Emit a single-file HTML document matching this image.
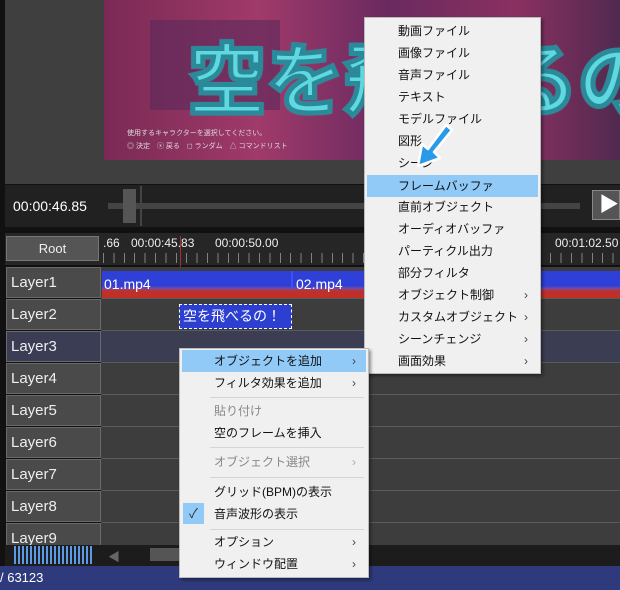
<!DOCTYPE html>
<html><head><meta charset="utf-8"><style>
*{margin:0;padding:0;box-sizing:border-box}
body{width:620px;height:590px;overflow:hidden;background:#111;font-family:"Liberation Sans","Noto Sans CJK JP",sans-serif;position:relative}
.a{position:absolute}
.lay{position:absolute;left:6px;width:95px;height:31px;background:#4a4a4a;border:1px solid #6a6a6a;color:#eee;font-size:15px;line-height:29px;padding-left:4px}
.row{position:absolute;left:101px;width:519px;height:32px;background:#3d3d3d;border-bottom:1px solid #5a5a5a}
.menu{position:absolute;background:#f0f0f0;border:1px solid #bbb;box-shadow:2px 2px 3px rgba(0,0,0,.4);font-size:12px;color:#111}
.mi{position:absolute;left:0;right:0;height:22px;line-height:22px;white-space:nowrap}
.hl{background:#91c9f7}
.ar{position:absolute;right:12px;top:0;color:#444}
.sep{position:absolute;height:1px;background:#d5d5d5}
.g{color:#888}
</style></head><body>
<div class="a" style="left:5px;top:0;width:615px;height:184px;background:#3f3f3f"></div>
<div class="a" style="left:104px;top:0;width:516px;height:160px;overflow:hidden;background:linear-gradient(90deg,#7a2a55,#a03a6a 30%,#6a2a60 55%,#8a3060 80%,#502a50)">
<div class="a" style="left:46px;top:20px;width:130px;height:90px;background:#5a2a5a;opacity:.6"></div>
<div class="a" style="left:84px;top:35px;font-size:78px;font-weight:bold;color:#5fd8e0;-webkit-text-stroke:5px #2a8a9a;line-height:92px;white-space:nowrap;text-shadow:0 0 3px #fff">空を飛べるの</div>
<div class="a" style="left:23px;top:128px;font-size:7px;color:#ddd;white-space:nowrap">使用するキャラクターを選択してください。</div>
<div class="a" style="left:23px;top:141px;font-size:7px;color:#ddd;white-space:nowrap">◎ 決定　ⓧ 戻る　◻ ランダム　△ コマンドリスト</div>
</div>
<div class="a" style="left:5px;top:185px;width:615px;height:42px;background:#212121"></div>
<div class="a" style="left:13px;top:198px;color:#fff;font-size:14px">00:00:46.85</div>
<div class="a" style="left:108px;top:203px;width:472px;height:6px;background:#444"></div>
<div class="a" style="left:123px;top:189px;width:13px;height:34px;background:#555"></div>
<div class="a" style="left:140px;top:186px;width:2px;height:40px;background:#444"></div>
<div class="a" style="left:592px;top:190px;width:28px;height:30px;background:#555;border:1px solid #888;color:#fff;font-size:20px;line-height:28px;padding-left:6px">▶</div>
<div class="a" style="left:5px;top:233px;width:615px;height:32px;background:#262626"></div>
<div class="a" style="left:6px;top:236px;width:93px;height:25px;background:#555;border:1px solid #777;color:#eee;font-size:13px;text-align:center;line-height:23px">Root</div>
<div class="a" style="left:103px;top:236px;color:#eee;font-size:12px">.66</div>
<div class="a" style="left:131px;top:236px;color:#eee;font-size:12px">00:00:45.83</div>
<div class="a" style="left:215px;top:236px;color:#eee;font-size:12px">00:00:50.00</div>
<div class="a" style="left:555px;top:236px;color:#eee;font-size:12px">00:01:02.50</div>
<div class="a" style="left:103px;top:253px;width:517px;height:10px;background:repeating-linear-gradient(90deg,#aaa 0 1px,transparent 1px 10.4px);opacity:.7"></div>
<div class="a" style="left:180px;top:236px;width:1px;height:300px;background:#c33;opacity:.8"></div>
<div class="row" style="top:267px"></div>
<div class="row" style="top:299px"></div>
<div class="row" style="top:331px;background:#3b3d52"></div>
<div class="row" style="top:363px"></div><div class="row" style="top:395px"></div><div class="row" style="top:427px"></div><div class="row" style="top:459px"></div><div class="row" style="top:491px"></div><div class="row" style="top:523px"></div>
<div class="lay" style="top:267px">Layer1</div><div class="lay" style="top:299px">Layer2</div><div class="lay" style="top:331px;background:#3b3d55">Layer3</div><div class="lay" style="top:363px">Layer4</div><div class="lay" style="top:395px">Layer5</div><div class="lay" style="top:427px">Layer6</div><div class="lay" style="top:459px">Layer7</div><div class="lay" style="top:491px">Layer8</div><div class="lay" style="top:523px">Layer9</div>
<div class="a" style="left:102px;top:271px;width:518px;height:27px;background:linear-gradient(#2f40d8 0,#2f40d8 55%,#7a4aa0 65%,#c03028 75%,#c03028)"></div>
<div class="a" style="left:291px;top:271px;width:2px;height:18px;background:#3f50f0"></div>
<div class="a" style="left:104px;top:276px;color:#fff;font-size:14px">01.mp4</div>
<div class="a" style="left:296px;top:276px;color:#fff;font-size:14px">02.mp4</div>
<div class="a" style="left:179px;top:304px;width:113px;height:25px;background:#2d3fd0;border:1px dashed #fff;color:#fff;font-size:14px;line-height:22px;padding-left:3px;white-space:nowrap">空を飛べるの！</div>
<div class="a" style="left:5px;top:545px;width:615px;height:21px;background:#1c1c1c"></div>
<div class="a" style="left:14px;top:546px;width:78px;height:18px;background:repeating-linear-gradient(90deg,#5a9ae8 0 2px,transparent 2px 4px)"></div>
<div class="a" style="left:108px;top:548px;color:#666;font-size:12px">◀</div>
<div class="a" style="left:150px;top:548px;width:40px;height:13px;background:#555"></div>
<div class="a" style="left:0;top:566px;width:620px;height:24px;background:#2e3a7c;color:#fff;font-size:13px;line-height:24px">/ 63123</div>
<div class="menu" style="left:364px;top:17px;width:177px;height:357px">
<div class="mi" style="top:2px;padding-left:33px">動画ファイル</div>
<div class="mi" style="top:24px;padding-left:33px">画像ファイル</div>
<div class="mi" style="top:46px;padding-left:33px">音声ファイル</div>
<div class="mi" style="top:68px;padding-left:33px">テキスト</div>
<div class="mi" style="top:90px;padding-left:33px">モデルファイル</div>
<div class="mi" style="top:112px;padding-left:33px">図形</div>
<div class="mi" style="top:134px;padding-left:33px">シーン</div>
<div class="mi hl" style="top:157px;left:2px;right:2px;padding-left:31px">フレームバッファ</div>
<div class="mi" style="top:178px;padding-left:33px">直前オブジェクト</div>
<div class="mi" style="top:200px;padding-left:33px">オーディオバッファ</div>
<div class="mi" style="top:222px;padding-left:33px">パーティクル出力</div>
<div class="mi" style="top:244px;padding-left:33px">部分フィルタ</div>
<div class="mi" style="top:266px;padding-left:33px">オブジェクト制御<span class="ar">›</span></div>
<div class="mi" style="top:288px;padding-left:33px">カスタムオブジェクト<span class="ar">›</span></div>
<div class="mi" style="top:310px;padding-left:33px">シーンチェンジ<span class="ar">›</span></div>
<div class="mi" style="top:332px;padding-left:33px">画面効果<span class="ar">›</span></div>
</div>
<svg class="a" style="left:412px;top:122px" width="44" height="50" viewBox="0 0 44 50"><path d="M34 3 L40 8 L22 30 L28 36 L6 44 L10 22 L16 27 Z" fill="#2a9ae8" stroke="#fff" stroke-width="2.5" stroke-linejoin="round"/></svg>
<div class="menu" style="left:179px;top:348px;width:190px;height:230px">
<div class="mi hl" style="top:1px;left:2px;right:2px;padding-left:32px">オブジェクトを追加<span class="ar" style="right:10px">›</span></div>
<div class="mi" style="top:23px;padding-left:34px">フィルタ効果を追加<span class="ar">›</span></div>
<div class="sep" style="top:48px;left:30px;right:4px"></div>
<div class="mi g" style="top:51px;padding-left:34px">貼り付け</div>
<div class="mi" style="top:73px;padding-left:34px">空のフレームを挿入</div>
<div class="sep" style="top:98px;left:30px;right:4px"></div>
<div class="mi g" style="top:102px;padding-left:34px">オブジェクト選択<span class="ar" style="color:#aaa">›</span></div>
<div class="sep" style="top:128px;left:30px;right:4px"></div>
<div class="mi" style="top:132px;padding-left:34px">グリッド(BPM)の表示</div>
<div class="a" style="left:3px;top:154px;width:21px;height:21px;background:#91c9f7;font-size:13px;text-align:center;line-height:21px;color:#333">✓</div>
<div class="mi" style="top:154px;padding-left:34px">音声波形の表示</div>
<div class="sep" style="top:180px;left:30px;right:4px"></div>
<div class="mi" style="top:182px;padding-left:34px">オプション<span class="ar">›</span></div>
<div class="mi" style="top:204px;padding-left:34px">ウィンドウ配置<span class="ar">›</span></div>
</div>
</body></html>
